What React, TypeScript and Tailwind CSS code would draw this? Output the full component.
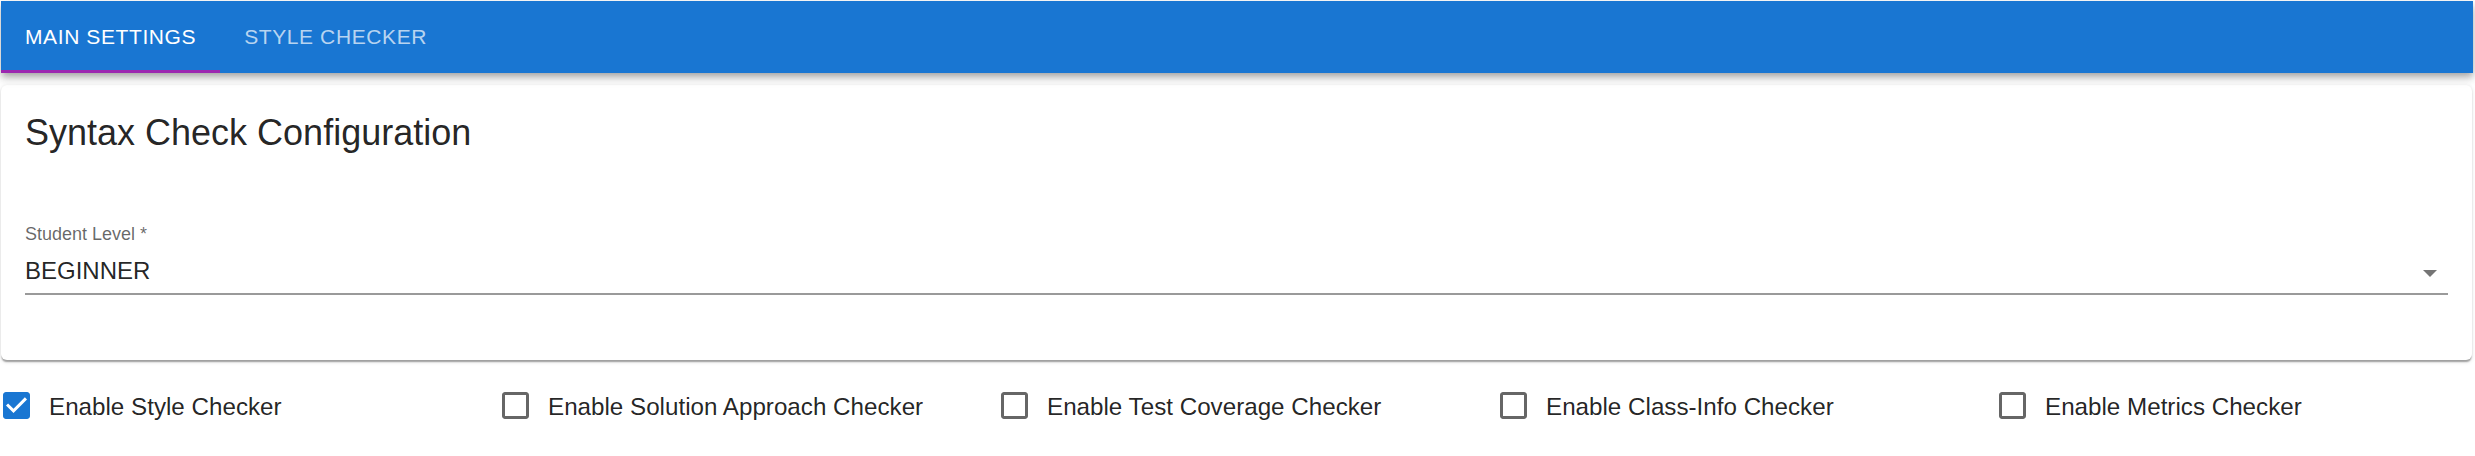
import { useState } from 'react'

const CHECKERS = [
  'Enable Style Checker',
  'Enable Solution Approach Checker',
  'Enable Test Coverage Checker',
  'Enable Class-Info Checker',
  'Enable Metrics Checker',
]

function CheckIcon({ checked }: { checked: boolean }) {
  if (checked) {
    return (
      <svg width="27" height="27" viewBox="3 3 18 18" className="shrink-0 text-[#1976d2]" fill="currentColor">
        <path d="M19 3H5c-1.11 0-2 .9-2 2v14c0 1.1.89 2 2 2h14c1.11 0 2-.9 2-2V5c0-1.1-.89-2-2-2zm-9 14l-5-5 1.41-1.41L10 14.17l7.59-7.59L19 8l-9 9z" />
      </svg>
    )
  }
  return (
    <svg width="27" height="27" viewBox="3 3 18 18" className="shrink-0 text-[#666666]" fill="currentColor">
      <path d="M19 5v14H5V5h14m0-2H5c-1.1 0-2 .9-2 2v14c0 1.1.9 2 2 2h14c1.1 0 2-.9 2-2V5c0-1.1-.9-2-2-2z" />
    </svg>
  )
}

export default function App() {
  const [tab, setTab] = useState(0)
  const [enabled, setEnabled] = useState<boolean[]>([true, false, false, false, false])

  const toggle = (i: number): void => {
    setEnabled(prev => prev.map((v, j) => (j === i ? !v : v)))
  }

  return (
    <div className="min-h-[456px] bg-white pl-[1px] pr-[2px] pt-[1px] font-['Liberation_Sans',Arial,sans-serif] text-[rgba(0,0,0,0.87)]">
      {/* ─── app bar with tabs ─────────────────────────────────── */}
      <header className="relative z-10 flex h-[72px] bg-[#1976d2] shadow-[0_3px_6px_-1.5px_rgba(0,0,0,0.2),0_6px_7.5px_0_rgba(0,0,0,0.14),0_1.5px_15px_0_rgba(0,0,0,0.12)]">
        {['Main Settings', 'Style Checker'].map((label, i) => (
          <button
            key={label}
            type="button"
            onClick={() => setTab(i)}
            className={
              'relative flex h-full items-center px-[24px] text-[21px] tracking-[0.02857em] uppercase ' +
              (tab === i ? 'text-white' : 'text-[rgba(255,255,255,0.7)]')
            }
          >
            {label}
            {tab === i && <span className="absolute bottom-0 left-0 right-0 h-[3px] bg-[#9c27b0]" />}
          </button>
        ))}
      </header>

      {/* ─── settings card ─────────────────────────────────────── */}
      <section className="mt-[12px] mr-[1px] rounded-[6px] bg-white px-[24px] pt-[24px] pb-[65px] shadow-[0_3px_1.5px_-1.5px_rgba(0,0,0,0.2),0_1.5px_1.5px_0_rgba(0,0,0,0.14),0_1.5px_4.5px_0_rgba(0,0,0,0.12)]">
        <h2 className="text-[36px] leading-[48px]">Syntax Check Configuration</h2>
        <div className="mt-[68px]">
          <label className="block text-[18px] leading-[18px] text-[rgba(0,0,0,0.6)]">Student Level *</label>
          <div className="mt-[16px] flex items-center border-b-2 border-[#9a9a9a] pb-[10px]">
            <span className="flex-1 text-[24px] leading-[24px]">BEGINNER</span>
            <svg width="14" height="7" viewBox="0 0 14 7" className="mr-[11px] mt-[4px] text-[#757575]" fill="currentColor">
              <path d="M0 0h14L7 7z" />
            </svg>
          </div>
        </div>
      </section>

      {/* ─── checker toggles ───────────────────────────────────── */}
      <div className="-ml-[1px] mt-[32px] grid grid-cols-[repeat(5,499px)]">
        {CHECKERS.map((label, i) => (
          <label key={label} className="flex h-[27px] cursor-pointer items-center pl-[3px]" onClick={() => toggle(i)}>
            <CheckIcon checked={enabled[i]} />
            <span className="ml-[19px] pt-[2px] text-[24.2px] leading-[27px]">{label}</span>
          </label>
        ))}
      </div>
    </div>
  )
}
